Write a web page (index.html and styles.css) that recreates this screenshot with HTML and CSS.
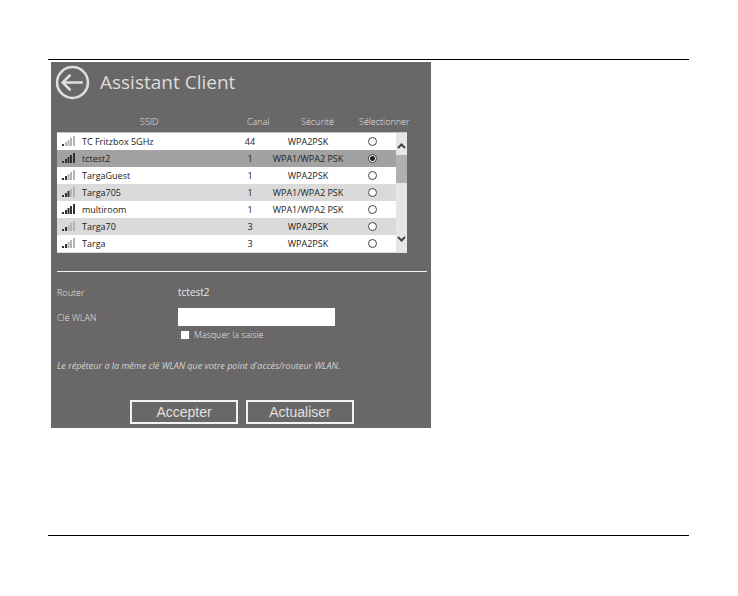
FILE: index.html
```
<!DOCTYPE html>
<html lang="fr">
<head>
<meta charset="utf-8">
<title>Assistant Client</title>
<link rel="stylesheet" href="styles.css">
</head>
<body>
<svg class="defs" aria-hidden="true">
  <symbol id="bars" viewBox="0 0 14 11">
    <rect class="b1" x="0" y="8" width="2" height="2"/>
    <rect class="b2" x="3" y="6" width="2" height="4"/>
    <rect class="b3" x="5.500" y="4" width="2" height="6"/>
    <rect class="b4" x="8" y="2" width="2" height="8"/>
    <rect class="b5" x="11" y="0" width="2" height="10"/>
  </symbol>
</svg>
<main class="page">
  <form class="panel">
    <header class="head">
      <button type="button" class="back" aria-label="Retour">
        <svg viewBox="0 0 34 34"><circle cx="17" cy="17" r="15"/><path d="M27 17H8M15 9.500 7.500 17l7.500 7.500"/></svg>
      </button>
      <h1>Assistant Client</h1>
    </header>

    <table class="networks">
      <colgroup><col><col class="c-canal"><col class="c-sec"><col class="c-sel"><col class="c-bar"></colgroup>
      <thead>
        <tr><th class="h-ssid">SSID</th><th class="h-canal">Canal</th><th class="h-sec">Sécurité</th><th class="h-sel" colspan="2">Sélectionner</th></tr>
      </thead>
      <tbody>
        <tr>
          <td class="ssid"><svg class="sig s1"><use href="#bars"/></svg><label for="n1">TC Fritzbox 5GHz</label></td><td>44</td><td>WPA2PSK</td><td><input type="radio" name="net" id="n1"></td>
          <td class="bar" rowspan="7">
            <div class="scroll">
              <svg class="arrow" viewBox="0 0 11 22"><path d="M2 15 5.500 11.500 9 15"/></svg>
              <div class="thumb"></div>
              <svg class="arrow down" viewBox="0 0 11 22"><path d="M2 7 5.500 10.500 9 7"/></svg>
            </div>
          </td>
        </tr>
        <tr class="on"><td class="ssid"><svg class="sig s5"><use href="#bars"/></svg><label for="n2">tctest2</label></td><td>1</td><td>WPA1/WPA2 PSK</td><td><input type="radio" name="net" id="n2" checked></td></tr>
        <tr><td class="ssid"><svg class="sig s2"><use href="#bars"/></svg><label for="n3">TargaGuest</label></td><td>1</td><td>WPA2PSK</td><td><input type="radio" name="net" id="n3"></td></tr>
        <tr class="alt"><td class="ssid"><svg class="sig s3"><use href="#bars"/></svg><label for="n4">Targa705</label></td><td>1</td><td>WPA1/WPA2 PSK</td><td><input type="radio" name="net" id="n4"></td></tr>
        <tr><td class="ssid"><svg class="sig s5"><use href="#bars"/></svg><label for="n5">multiroom</label></td><td>1</td><td>WPA1/WPA2 PSK</td><td><input type="radio" name="net" id="n5"></td></tr>
        <tr class="alt"><td class="ssid"><svg class="sig s2"><use href="#bars"/></svg><label for="n6">Targa70</label></td><td>3</td><td>WPA2PSK</td><td><input type="radio" name="net" id="n6"></td></tr>
        <tr><td class="ssid"><svg class="sig s2"><use href="#bars"/></svg><label for="n7">Targa</label></td><td>3</td><td>WPA2PSK</td><td><input type="radio" name="net" id="n7"></td></tr>
      </tbody>
    </table>

    <section class="fields">
      <span>Router</span>
      <output class="router">tctest2</output>
      <label for="key">Clé WLAN</label>
      <input class="key" type="text" id="key">
      <div class="mask"><input type="checkbox" id="mask"><label for="mask">Masquer la saisie</label></div>
    </section>

    <p class="note">Le répéteur a la même clé WLAN que votre point d'accès/routeur WLAN.</p>

    <div class="actions">
      <button type="button">Accepter</button>
      <button type="button">Actualiser</button>
    </div>
  </form>
</main>
</body>
</html>
```
FILE: styles.css
```
* { box-sizing: border-box; }
body { margin: 0; background: #fff; }
.defs { position: absolute; width: 0; height: 0; }

.page {
  margin: 59px 49px 60px 48px;
  padding: 2px 3px 107px;
  border-top: 1px solid #000;
  border-bottom: 1px solid #000;
}
.panel {
  max-width: 380px;
  padding: 2px 4px 4px 6px;
  background: #696767;
  color: #e6e6e6;
  font: 300 9px/17px "Open Sans", "Noto Sans", sans-serif;
}

.head { display: flex; align-items: center; gap: 10px; margin-left: -2px; }
.head h1 { margin: 0; font-size: 19px; line-height: 36px; font-weight: 400; color: #dcdcdc; }
.back { width: 35px; height: 35px; padding: 0; border: 0; background: none; }
.back svg { display: block; width: 35px; height: 35px; fill: none; stroke: #dedede; stroke-width: 2.5; }

.networks {
  width: 100%;
  max-width: 350px;
  margin-top: 13px;
  border-collapse: separate;
  border-spacing: 0;
  table-layout: fixed;
}
.c-canal { width: 32px; }
.c-sec { width: 84px; }
.c-sel { width: 46px; }
.c-bar { width: 11px; }
.networks th {
  height: 19px;
  padding: 0;
  font-weight: 300;
  line-height: 17px;
  text-align: left;
  vertical-align: top;
  white-space: nowrap;
}
.networks .h-ssid { padding-left: 83px; }
.networks .h-canal { padding-left: 13px; }
.networks .h-sec { padding-left: 35px; }
.networks .h-sel { padding-left: 9px; }
.networks td {
  height: 17px;
  padding: 0;
  background: #fff;
  color: #222;
  font-weight: 400;
  text-align: center;
  white-space: nowrap;
}
.networks .alt td { background: #dadada; }
.networks .on td { background: #a2a2a2; }
.networks tbody tr:first-child td { border-top: 1px solid #c4c4c4; }
.networks tr:last-child td { border-bottom: 1px solid #dadada; }
.networks .ssid { padding-left: 5px; text-align: left; }
.ssid label { vertical-align: top; }
.sig { width: 14px; height: 11px; margin: 3px 6px 0 0; vertical-align: top; }
.b1 { fill: var(--b1, #b4b4b4); }
.b2 { fill: var(--b2, #b4b4b4); }
.b3 { fill: var(--b3, #b4b4b4); }
.b4 { fill: var(--b4, #b4b4b4); }
.b5 { fill: var(--b5, #b4b4b4); }
.s1 { --b1: #333; }
.s2 { --b1: #333; --b2: #333; }
.s3 { --b1: #333; --b2: #333; --b3: #333; }
.s5 { --b1: #333; --b2: #333; --b3: #333; --b4: #333; --b5: #333; }

input[type="radio"] {
  appearance: none;
  display: block;
  width: 9px;
  height: 9px;
  margin: 0 auto;
  border: 1px solid #444;
  border-radius: 50%;
  background: #fff;
}
input[type="radio"]:checked { background: radial-gradient(circle, #222 2px, #fff 3px); }

.networks .bar { vertical-align: top; background: #e6e6e6; }
.scroll { display: flex; flex-direction: column; height: 119px; }
.arrow { display: block; width: 11px; height: 22px; fill: none; stroke: #444; stroke-width: 2; }
.thumb { height: 28px; background: #b0b0b0; }
.down { margin-top: auto; }

.fields {
  display: grid;
  grid-template-columns: 121px 1fr;
  align-items: center;
  margin-top: 18px;
  padding-top: 12px;
  border-top: 1px solid #f4f4f4;
}
.router { font-size: 10px; font-weight: 400; }
.key {
  width: 157px;
  height: 18px;
  margin: 7px 0 0;
  padding: 0 3px;
  border: 0;
  background: #fff;
  font: 11px "Open Sans", sans-serif;
}
.fields > label { margin-top: 7px; }
.mask { grid-column: 2; display: flex; align-items: center; gap: 5px; padding-left: 3px; }
.mask input {
  appearance: none;
  width: 8px;
  height: 8px;
  margin: 0;
  background: #fff;
}
.note { margin: 14px 0 26px; font-style: italic; font-weight: 400; color: #d4d4d4; }
.actions { display: flex; justify-content: center; gap: 8px; }
.actions button {
  width: 108px;
  height: 24px;
  padding: 0;
  border: 2px solid #f2f2f2;
  background: transparent;
  color: #e0e0e0;
  font: 14px "Liberation Sans", Arial, sans-serif;
}
```
